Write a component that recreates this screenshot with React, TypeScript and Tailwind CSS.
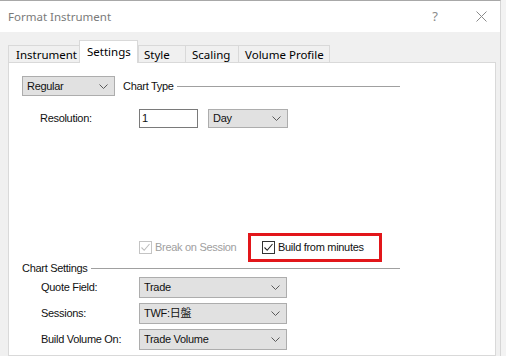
import React from 'react';

const ui = { fontFamily: '"Noto Sans", "Open Sans", sans-serif' };
const ctl = { fontFamily: '"Liberation Sans", Arial, "Noto Sans CJK TC", sans-serif' };

const Chevron = () => (
  <svg width="9" height="5" viewBox="0 0 9 5" fill="none">
    <path d="M0.5 0.5 L4.5 4.5 L8.5 0.5" stroke="#5a5a5a" strokeWidth="1" />
  </svg>
);

const Select = ({ value, className }: { value: string; className: string }) => (
  <div
    className={`flex items-center justify-between border border-[#adadad] bg-[#e1e1e1] pl-[4px] pr-[6px] text-[11px] text-[#111111] ${className}`}
    style={ctl}
  >
    <span>{value}</span>
    <Chevron />
  </div>
);

const Check = ({ disabled }: { disabled?: boolean }) => (
  <div
    className={`flex h-[13px] w-[13px] shrink-0 items-center justify-center border bg-white ${
      disabled ? 'border-[#c4c4c4]' : 'border-[#333333]'
    }`}
  >
    <svg width="11" height="11" viewBox="0 0 11 11" fill="none">
      <path d="M1.5 5.5 L4.2 8.3 L9.5 2" stroke={disabled ? '#bdbdbd' : '#222222'} strokeWidth="1.1" />
    </svg>
  </div>
);

const tabs = [
  { label: 'Instrument', w: 'w-[71px]', pl: 'pl-[7px]' },
  { label: 'Settings', w: 'w-[59px]', pl: 'pl-[7px]', active: true },
  { label: 'Style', w: 'w-[47px]', pl: 'pl-[5px]' },
  { label: 'Scaling', w: 'w-[53px]', pl: 'pl-[6px]' },
  { label: 'Volume Profile', w: 'w-[92px]', pl: 'pl-[6px]' },
];

const fields = [
  { label: 'Quote Field:', value: 'Trade' },
  { label: 'Sessions:', value: 'TWF:日盤' },
  { label: 'Build Volume On:', value: 'Trade Volume' },
];

export default function App() {
  return (
    <div className="flex h-[356px] w-[506px] overflow-hidden bg-[#f3f3f3]">
      <div className="flex w-[501px] shrink-0 flex-col border-r border-t border-[#d6d6d6] border-t-[#a8a8a8] bg-[#f0f0f0]">
        <div className="flex h-[31px] shrink-0 items-center bg-white pl-[8px] text-[11.5px] text-[#7a7a7a]" style={ui}>
          <span>Format Instrument</span>
          <span className="ml-auto text-[13px] text-[#8a8a8a]">?</span>
          <svg className="ml-[38px] mr-[13px]" width="11" height="11" viewBox="0 0 11 11">
            <path d="M0.5 0.5 L10.5 10.5 M10.5 0.5 L0.5 10.5" stroke="#8a8a8a" strokeWidth="1" />
          </svg>
        </div>

        <div className="ml-[8px] mt-[8px] flex h-[22px] items-end" style={ui}>
          {tabs.map((t, i) =>
            t.active ? (
              <div
                key={t.label}
                className={`relative z-10 -mb-px h-[23px] border-x border-t border-[#d9d9d9] bg-white pt-[2px] text-[11.5px] text-black ${t.w} ${t.pl}`}
              >
                {t.label}
              </div>
            ) : (
              <div
                key={t.label}
                className={`h-[17px] border-t border-[#d9d9d9] pt-[1px] text-[11.5px] leading-[15px] text-black ${t.w} ${t.pl} ${
                  i === 0 ? 'border-l' : ''
                } ${i === tabs.length - 1 ? 'border-r' : ''} ${i > 1 ? 'border-l' : ''}`}
              >
                {t.label}
              </div>
            )
          )}
        </div>

        <div
          className="ml-[8px] flex w-[488px] flex-1 flex-col border border-[#d9d9d9] bg-white text-[11px] tracking-[-0.3px] text-[#111111]"
          style={ctl}
        >
          <div className="mt-[13px] flex h-[20px] items-center">
            <Select value="Regular" className="ml-[13px] h-[20px] w-[93px]" />
            <span className="ml-[8px]">Chart Type</span>
            <div className="ml-[3px] mr-[95px] h-px flex-1 bg-[#a0a0a0]" />
          </div>

          <div className="mt-[13px] flex h-[19px] items-center">
            <span className="w-[130px] pl-[31px]">Resolution:</span>
            <div className="flex h-[19px] w-[59px] items-center border border-[#7a7a7a] pl-[2px]">1</div>
            <Select value="Day" className="ml-[10px] h-[19px] w-[80px]" />
          </div>

          <div className="mt-[105px] flex h-[29px] items-center">
            <div className="ml-[130px] flex w-[109px] items-center gap-[3px] text-[#a0a0a0]">
              <Check disabled />
              <span>Break on Session</span>
            </div>
            <div className="flex h-[29px] w-[134px] items-center gap-[3px] border-[3px] border-[#e2161a] pl-[11px]">
              <Check />
              <span>Build from minutes</span>
            </div>
          </div>

          <div className="flex h-[12px] items-center">
            <span className="ml-[13px]">Chart Settings</span>
            <div className="ml-[3px] mr-[95px] h-px flex-1 bg-[#a0a0a0]" />
          </div>

          <div className="mt-[3px] flex flex-col gap-[5px]">
            {fields.map((f) => (
              <div key={f.label} className="flex h-[21px] items-center">
                <span className="w-[130px] pl-[32px]">{f.label}</span>
                <Select value={f.value} className="h-[21px] w-[148px]" />
              </div>
            ))}
          </div>
        </div>
      </div>
    </div>
  );
}
